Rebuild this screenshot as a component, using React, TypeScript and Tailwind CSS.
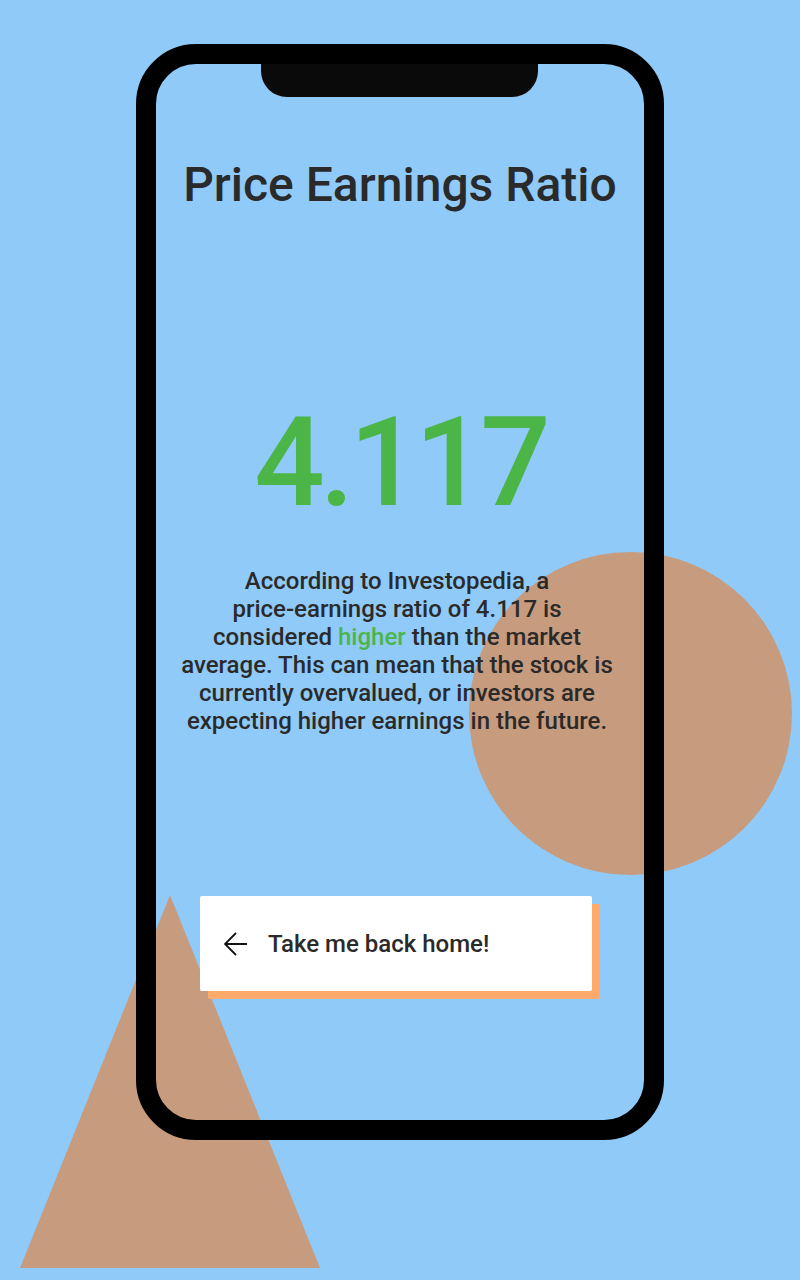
import React from "react";

export default function App() {
  return (
    <div
      className="relative w-[800px] h-[1280px] overflow-hidden bg-[#90CAF9]"
      style={{ fontFamily: "Roboto, 'Noto Sans', sans-serif" }}
    >
      {/* decorative shapes */}
      <div className="absolute left-[469px] top-[552px] w-[323px] h-[323px] rounded-full bg-[#C69B7E]" />
      <svg
        className="absolute left-[20px] top-[895px]"
        width="300"
        height="373"
        viewBox="0 0 300 373"
      >
        <polygon points="150,0 0,373 300,373" fill="#C69B7E" />
      </svg>

      {/* phone */}
      <div className="relative z-10 ml-[136px] mt-[44px] w-[528px] h-[1096px] box-border border-[20px] border-black rounded-[60px]">
        <div className="absolute left-[105px] top-0 w-[277px] h-[33px] rounded-b-[26px] bg-[#0a0a0a]" />
        <div className="flex flex-col items-center">
          <h1 className="pt-[93px] text-[48px] leading-[56px] font-medium text-[#2a2a2a]">
            Price Earnings Ratio
          </h1>
          <div className="mt-[186px] text-[124px] leading-[128px] font-medium tracking-[-5px] text-[#4CB548]">
            4.117
          </div>
          <p className="mt-[40px] mr-[6px] w-[470px] text-center text-[24px] leading-[28px] font-medium text-[#2a2a2a]">
            According to Investopedia, a<br />
            price-earnings ratio of 4.117 is<br />
            considered <span className="text-[#4CB548]">higher</span> than the market
            <br />
            average. This can mean that the stock is<br />
            currently overvalued, or investors are<br />
            expecting higher earnings in the future.
          </p>
          <button className="mt-[161px] mr-[8px] flex items-center w-[392px] h-[95px] rounded-[2px] bg-white pl-[24px] shadow-[8px_8px_0_#FFA96A] cursor-pointer">
            <svg width="24" height="24" viewBox="0 0 24 24" fill="none">
              <path
                d="M23 12H1M12 1L1 12L12 23"
                stroke="#111"
                strokeWidth="1.8"
              />
            </svg>
            <span className="ml-[20px] text-[24px] font-medium text-[#2a2a2a]">
              Take me back home!
            </span>
          </button>
        </div>
      </div>
    </div>
  );
}
